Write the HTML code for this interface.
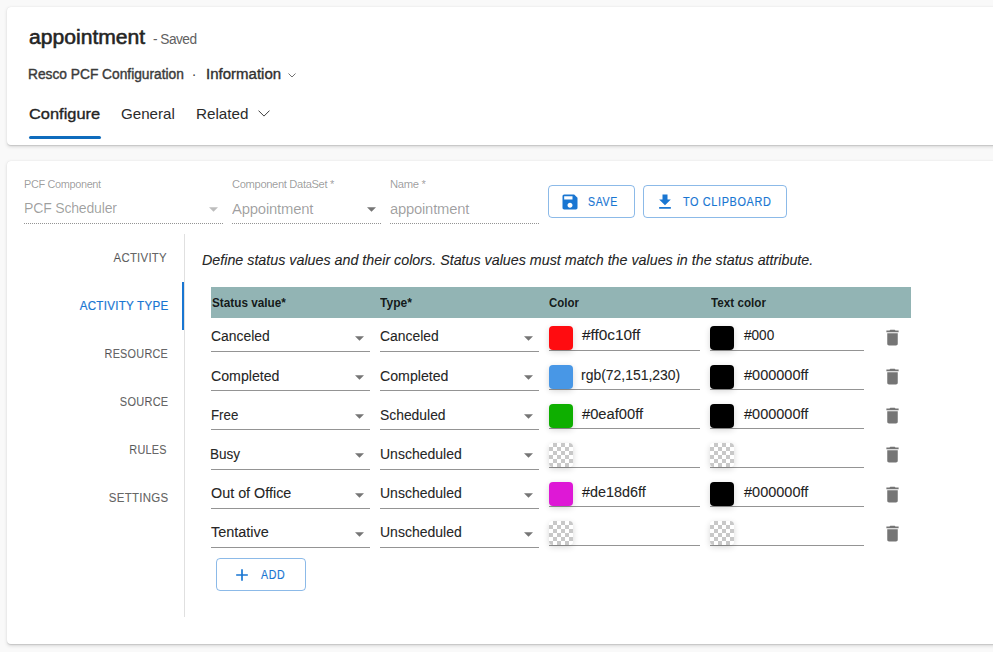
<!DOCTYPE html>
<html><head><meta charset="utf-8">
<style>
*{box-sizing:border-box;margin:0;padding:0}
html,body{width:993px;height:652px;overflow:hidden;background:#f9f9f9;font-family:"Liberation Sans",sans-serif}
body{position:relative}
.abs{position:absolute;white-space:nowrap}
.card{position:absolute;background:#fff;border-radius:4px;box-shadow:0 1.6px 3.6px rgba(0,0,0,.13),0 .3px .9px rgba(0,0,0,.11)}
.t{position:absolute;white-space:nowrap;line-height:1}
.dotl{position:absolute;height:1px;background-image:linear-gradient(to right,rgba(0,0,0,.42) 50%,transparent 50%);background-size:2px 1px;background-repeat:repeat-x}
.btn{position:absolute;border:1px solid rgba(25,118,210,.5);border-radius:4px}
.ul{position:absolute;height:1px;background:rgba(0,0,0,.42)}
.arr{position:absolute;width:9px;height:5px}
.sw{position:absolute;width:24px;height:24px;border-radius:4px;box-shadow:0 2px 6px rgba(0,0,0,.16)}
.chk{background:repeating-conic-gradient(#c8c8c8 0 25%,#fff 0 50%) 0 0/8px 8px}
</style></head>
<body>
<div class="card" style="left:7px;top:7px;width:1000px;height:138px"></div>
<div class="t " style="left:28.70px;top:26.87px;font-size:20px;transform:scaleX(1.0559);transform-origin:0 0;color:#242424;-webkit-text-stroke:0.55px #242424">appointment</div>
<div class="t " style="left:153.00px;top:32.35px;font-size:14px;transform:scaleX(0.9789);transform-origin:0 0;color:#616161;letter-spacing:-0.55px">- Saved</div>
<div class="t " style="left:28.00px;top:67.25px;font-size:14px;transform:scaleX(0.9821);transform-origin:0 0;color:#3b3b3b;-webkit-text-stroke:0.4px #3b3b3b">Resco PCF Configuration</div>
<div class="t " style="left:191.80px;top:67.45px;font-size:14px;color:#424242">·</div>
<div class="t " style="left:205.50px;top:67.15px;font-size:14px;transform:scaleX(1.0725);transform-origin:0 0;color:#303030;-webkit-text-stroke:0.35px #303030">Information</div>
<svg class="abs" style="left:288px;top:72.8px" width="8" height="5" viewBox="0 0 8 5"><path d="M0.5 0.5l3.5 3.5 3.5-3.5" fill="none" stroke="#616161" stroke-width="0.9"/></svg>
<div class="t " style="left:28.50px;top:105.80px;font-size:15px;transform:scaleX(1.0939);transform-origin:0 0;color:#242424;-webkit-text-stroke:0.35px #242424">Configure</div>
<div class="t " style="left:120.50px;top:105.80px;font-size:15px;transform:scaleX(1.0086);transform-origin:0 0;color:#2b2b2b">General</div>
<div class="t " style="left:196.10px;top:105.80px;font-size:15px;transform:scaleX(1.0161);transform-origin:0 0;color:#2b2b2b">Related</div>
<svg class="abs" style="left:257.5px;top:109.5px" width="12" height="7" viewBox="0 0 12 7"><path d="M0.5 0.6l5.5 5.5 5.5-5.5" fill="none" stroke="#333" stroke-width="0.95"/></svg>
<div class="abs" style="left:29px;top:136px;width:72px;height:3px;border-radius:1.5px;background:#0f6cbd"></div>
<div class="card" style="left:7px;top:161px;width:1000px;height:483px"></div>
<div class="t " style="left:23.60px;top:178.89px;font-size:11px;transform:scaleX(0.9922);transform-origin:0 0;color:rgba(0,0,0,.4);letter-spacing:-0.35px">PCF Component</div>
<div class="t " style="left:23.60px;top:200.95px;font-size:14px;transform:scaleX(1.0044);transform-origin:0 0;color:rgba(0,0,0,.38);letter-spacing:-0.2px">PCF Scheduler</div>
<svg class="arr" style="left:209.00px;top:207.40px" viewBox="0 0 9 5"><path d="M0 0.2h9L4.5 4.7z" fill="rgba(0,0,0,.26)"/></svg>
<div class="dotl" style="left:24px;top:223px;width:200px"></div>
<div class="t " style="left:232.40px;top:178.89px;font-size:11px;transform:scaleX(1.0159);transform-origin:0 0;color:rgba(0,0,0,.4);letter-spacing:-0.35px">Component DataSet *</div>
<div class="t " style="left:232.00px;top:201.95px;font-size:14px;transform:scaleX(1.0623);transform-origin:0 0;color:rgba(0,0,0,.38);letter-spacing:-0.2px">Appointment</div>
<svg class="arr" style="left:367.20px;top:207.40px" viewBox="0 0 9 5"><path d="M0 0.2h9L4.5 4.7z" fill="rgba(0,0,0,.54)"/></svg>
<div class="dotl" style="left:232px;top:223px;width:150px"></div>
<div class="t " style="left:389.50px;top:178.89px;font-size:11px;transform:scaleX(1.0238);transform-origin:0 0;color:rgba(0,0,0,.4);letter-spacing:-0.35px">Name *</div>
<div class="t " style="left:390.00px;top:201.95px;font-size:14px;transform:scaleX(1.0562);transform-origin:0 0;color:rgba(0,0,0,.38);letter-spacing:-0.2px">appointment</div>
<div class="dotl" style="left:390px;top:223px;width:150px"></div>
<div class="btn" style="left:548px;top:185px;width:87px;height:33px"></div><svg class="abs" style="left:560px;top:192px" width="20" height="20" viewBox="0 0 24 24"><path fill="#1976d2" d="M17 3H5c-1.11 0-2 .9-2 2v14c0 1.1.89 2 2 2h14c1.1 0 2-.9 2-2V7l-4-4zm-5 16c-1.66 0-3-1.34-3-3s1.34-3 3-3 3 1.34 3 3-1.34 3-3 3zm3-10H5V5h10v4z"/></svg><div class="t " style="left:588.00px;top:196.04px;font-size:12px;transform:scaleX(0.8841);transform-origin:0 0;color:#1976d2;letter-spacing:0.7px;-webkit-text-stroke:0.15px #1976d2">SAVE</div>
<div class="btn" style="left:643px;top:185px;width:144px;height:33px"></div><svg class="abs" style="left:655px;top:192px" width="20" height="20" viewBox="0 0 24 24"><path fill="#1976d2" d="M19 9h-4V3H9v6H5l7 7 7-7zM5 18v2h14v-2H5z"/></svg><div class="t " style="left:683.00px;top:196.04px;font-size:12px;transform:scaleX(0.9074);transform-origin:0 0;color:#1976d2;letter-spacing:0.7px;-webkit-text-stroke:0.15px #1976d2">TO CLIPBOARD</div>
<div class="abs" style="left:184px;top:234px;width:1px;height:383px;background:rgba(0,0,0,.12)"></div>
<div class="abs" style="left:182px;top:282px;width:2px;height:48px;background:#1976d2"></div>
<div class="t " style="right:825.70px;top:251.20px;font-size:13px;transform:scaleX(0.8760);transform-origin:100% 0;color:rgba(0,0,0,.6);letter-spacing:0.3px;-webkit-text-stroke:0.2px rgba(0,0,0,.6)">ACTIVITY</div>
<div class="t " style="right:824.90px;top:299.20px;font-size:13px;transform:scaleX(0.8929);transform-origin:100% 0;color:#1976d2;letter-spacing:0.3px;-webkit-text-stroke:0.2px #1976d2">ACTIVITY TYPE</div>
<div class="t " style="right:824.70px;top:347.20px;font-size:13px;transform:scaleX(0.8352);transform-origin:100% 0;color:rgba(0,0,0,.6);letter-spacing:0.3px;-webkit-text-stroke:0.2px rgba(0,0,0,.6)">RESOURCE</div>
<div class="t " style="right:824.70px;top:395.20px;font-size:13px;transform:scaleX(0.8461);transform-origin:100% 0;color:rgba(0,0,0,.6);letter-spacing:0.3px;-webkit-text-stroke:0.2px rgba(0,0,0,.6)">SOURCE</div>
<div class="t " style="right:825.70px;top:443.20px;font-size:13px;transform:scaleX(0.8362);transform-origin:100% 0;color:rgba(0,0,0,.6);letter-spacing:0.3px;-webkit-text-stroke:0.2px rgba(0,0,0,.6)">RULES</div>
<div class="t " style="right:824.70px;top:491.20px;font-size:13px;transform:scaleX(0.8837);transform-origin:100% 0;color:rgba(0,0,0,.6);letter-spacing:0.3px;-webkit-text-stroke:0.2px rgba(0,0,0,.6)">SETTINGS</div>
<div class="t " style="left:201.50px;top:252.95px;font-size:14px;transform:scaleX(1.0201);transform-origin:0 0;font-style:italic;color:rgba(0,0,0,.87);-webkit-text-stroke:0.2px rgba(0,0,0,.6)">Define status values and their colors. Status values must match the values in the status attribute.</div>
<div class="abs" style="left:211px;top:287px;width:700px;height:31px;background:#92b4b4"></div>
<div class="t " style="left:211.60px;top:296.20px;font-size:13px;transform:scaleX(0.9047);transform-origin:0 0;font-weight:bold;color:rgba(0,0,0,.87)">Status value*</div>
<div class="t " style="left:380.20px;top:296.20px;font-size:13px;transform:scaleX(0.9272);transform-origin:0 0;font-weight:bold;color:rgba(0,0,0,.87)">Type*</div>
<div class="t " style="left:549.00px;top:296.20px;font-size:13px;transform:scaleX(0.8824);transform-origin:0 0;font-weight:bold;color:rgba(0,0,0,.87)">Color</div>
<div class="t " style="left:711.00px;top:296.20px;font-size:13px;transform:scaleX(0.8989);transform-origin:0 0;font-weight:bold;color:rgba(0,0,0,.87)">Text color</div>
<div class="t " style="left:211.40px;top:329.35px;font-size:14px;transform:scaleX(0.9934);transform-origin:0 0;color:rgba(0,0,0,.87);-webkit-text-stroke:0.2px rgba(0,0,0,.6)">Canceled</div>
<svg class="arr" style="left:354.80px;top:335.70px" viewBox="0 0 9 5"><path d="M0 0.2h9L4.5 4.7z" fill="rgba(0,0,0,.54)"/></svg>
<div class="ul" style="left:211px;top:351px;width:159px"></div>
<div class="t " style="left:380.40px;top:329.35px;font-size:14px;transform:scaleX(0.9934);transform-origin:0 0;color:rgba(0,0,0,.87);-webkit-text-stroke:0.2px rgba(0,0,0,.6)">Canceled</div>
<svg class="arr" style="left:523.80px;top:335.70px" viewBox="0 0 9 5"><path d="M0 0.2h9L4.5 4.7z" fill="rgba(0,0,0,.54)"/></svg>
<div class="ul" style="left:380px;top:351px;width:159px"></div>
<div class="ul" style="left:549px;top:350px;width:151px"></div>
<div class="sw" style="left:549px;top:326px;background:#ff0c10"></div>
<div class="t " style="left:582.40px;top:328.35px;font-size:14px;transform:scaleX(1.0969);transform-origin:0 0;color:rgba(0,0,0,.87);-webkit-text-stroke:0.2px rgba(0,0,0,.6)">#ff0c10ff</div>
<div class="ul" style="left:710px;top:350px;width:154px"></div>
<div class="sw" style="left:710px;top:326px;background:#000"></div>
<div class="t " style="left:743.60px;top:328.35px;font-size:14px;transform:scaleX(0.9712);transform-origin:0 0;color:rgba(0,0,0,.87);-webkit-text-stroke:0.2px rgba(0,0,0,.6)">#000</div>
<svg class="abs" style="left:881.5px;top:326.80px" width="21" height="21" viewBox="0 0 24 24"><path fill="rgba(0,0,0,.54)" d="M6 19c0 1.1.9 2 2 2h8c1.1 0 2-.9 2-2V7H6v12zM19 4h-3.5l-1-1h-5l-1 1H5v2h14V4z"/></svg>
<div class="t " style="left:211.40px;top:368.55px;font-size:14px;transform:scaleX(1.0118);transform-origin:0 0;color:rgba(0,0,0,.87);-webkit-text-stroke:0.2px rgba(0,0,0,.6)">Completed</div>
<svg class="arr" style="left:354.80px;top:374.90px" viewBox="0 0 9 5"><path d="M0 0.2h9L4.5 4.7z" fill="rgba(0,0,0,.54)"/></svg>
<div class="ul" style="left:211px;top:390px;width:159px"></div>
<div class="t " style="left:380.40px;top:368.55px;font-size:14px;transform:scaleX(1.0118);transform-origin:0 0;color:rgba(0,0,0,.87);-webkit-text-stroke:0.2px rgba(0,0,0,.6)">Completed</div>
<svg class="arr" style="left:523.80px;top:374.90px" viewBox="0 0 9 5"><path d="M0 0.2h9L4.5 4.7z" fill="rgba(0,0,0,.54)"/></svg>
<div class="ul" style="left:380px;top:390px;width:159px"></div>
<div class="ul" style="left:549px;top:389px;width:151px"></div>
<div class="sw" style="left:549px;top:365px;background:rgb(72,151,230)"></div>
<div class="t " style="left:581.40px;top:367.50px;font-size:14px;transform:scaleX(0.9960);transform-origin:0 0;color:rgba(0,0,0,.87);-webkit-text-stroke:0.2px rgba(0,0,0,.6)">rgb(72,151,230)</div>
<div class="ul" style="left:710px;top:389px;width:154px"></div>
<div class="sw" style="left:710px;top:365px;background:#000"></div>
<div class="t " style="left:743.60px;top:367.50px;font-size:14px;transform:scaleX(1.0356);transform-origin:0 0;color:rgba(0,0,0,.87);-webkit-text-stroke:0.2px rgba(0,0,0,.6)">#000000ff</div>
<svg class="abs" style="left:881.5px;top:366.00px" width="21" height="21" viewBox="0 0 24 24"><path fill="rgba(0,0,0,.54)" d="M6 19c0 1.1.9 2 2 2h8c1.1 0 2-.9 2-2V7H6v12zM19 4h-3.5l-1-1h-5l-1 1H5v2h14V4z"/></svg>
<div class="t " style="left:211.40px;top:407.75px;font-size:14px;transform:scaleX(0.9496);transform-origin:0 0;color:rgba(0,0,0,.87);-webkit-text-stroke:0.2px rgba(0,0,0,.6)">Free</div>
<svg class="arr" style="left:354.80px;top:414.10px" viewBox="0 0 9 5"><path d="M0 0.2h9L4.5 4.7z" fill="rgba(0,0,0,.54)"/></svg>
<div class="ul" style="left:211px;top:429px;width:159px"></div>
<div class="t " style="left:380.40px;top:407.75px;font-size:14px;transform:scaleX(0.9909);transform-origin:0 0;color:rgba(0,0,0,.87);-webkit-text-stroke:0.2px rgba(0,0,0,.6)">Scheduled</div>
<svg class="arr" style="left:523.80px;top:414.10px" viewBox="0 0 9 5"><path d="M0 0.2h9L4.5 4.7z" fill="rgba(0,0,0,.54)"/></svg>
<div class="ul" style="left:380px;top:429px;width:159px"></div>
<div class="ul" style="left:549px;top:428px;width:151px"></div>
<div class="sw" style="left:549px;top:404px;background:#0eaf00"></div>
<div class="t " style="left:582.40px;top:406.65px;font-size:14px;transform:scaleX(1.0513);transform-origin:0 0;color:rgba(0,0,0,.87);-webkit-text-stroke:0.2px rgba(0,0,0,.6)">#0eaf00ff</div>
<div class="ul" style="left:710px;top:428px;width:154px"></div>
<div class="sw" style="left:710px;top:404px;background:#000"></div>
<div class="t " style="left:743.60px;top:406.65px;font-size:14px;transform:scaleX(1.0356);transform-origin:0 0;color:rgba(0,0,0,.87);-webkit-text-stroke:0.2px rgba(0,0,0,.6)">#000000ff</div>
<svg class="abs" style="left:881.5px;top:405.20px" width="21" height="21" viewBox="0 0 24 24"><path fill="rgba(0,0,0,.54)" d="M6 19c0 1.1.9 2 2 2h8c1.1 0 2-.9 2-2V7H6v12zM19 4h-3.5l-1-1h-5l-1 1H5v2h14V4z"/></svg>
<div class="t " style="left:210.40px;top:446.95px;font-size:14px;transform:scaleX(0.9688);transform-origin:0 0;color:rgba(0,0,0,.87);-webkit-text-stroke:0.2px rgba(0,0,0,.6)">Busy</div>
<svg class="arr" style="left:354.80px;top:453.30px" viewBox="0 0 9 5"><path d="M0 0.2h9L4.5 4.7z" fill="rgba(0,0,0,.54)"/></svg>
<div class="ul" style="left:211px;top:469px;width:159px"></div>
<div class="t " style="left:380.40px;top:446.95px;font-size:14px;transform:scaleX(1.0009);transform-origin:0 0;color:rgba(0,0,0,.87);-webkit-text-stroke:0.2px rgba(0,0,0,.6)">Unscheduled</div>
<svg class="arr" style="left:523.80px;top:453.30px" viewBox="0 0 9 5"><path d="M0 0.2h9L4.5 4.7z" fill="rgba(0,0,0,.54)"/></svg>
<div class="ul" style="left:380px;top:469px;width:159px"></div>
<div class="ul" style="left:549px;top:467px;width:151px"></div>
<div class="sw chk" style="left:549px;top:443px"></div>
<div class="ul" style="left:710px;top:467px;width:154px"></div>
<div class="sw chk" style="left:710px;top:443px"></div>
<svg class="abs" style="left:881.5px;top:444.40px" width="21" height="21" viewBox="0 0 24 24"><path fill="rgba(0,0,0,.54)" d="M6 19c0 1.1.9 2 2 2h8c1.1 0 2-.9 2-2V7H6v12zM19 4h-3.5l-1-1h-5l-1 1H5v2h14V4z"/></svg>
<div class="t " style="left:211.40px;top:486.15px;font-size:14px;transform:scaleX(1.0256);transform-origin:0 0;color:rgba(0,0,0,.87);-webkit-text-stroke:0.2px rgba(0,0,0,.6)">Out of Office</div>
<svg class="arr" style="left:354.80px;top:492.50px" viewBox="0 0 9 5"><path d="M0 0.2h9L4.5 4.7z" fill="rgba(0,0,0,.54)"/></svg>
<div class="ul" style="left:211px;top:508px;width:159px"></div>
<div class="t " style="left:380.40px;top:486.15px;font-size:14px;transform:scaleX(1.0009);transform-origin:0 0;color:rgba(0,0,0,.87);-webkit-text-stroke:0.2px rgba(0,0,0,.6)">Unscheduled</div>
<svg class="arr" style="left:523.80px;top:492.50px" viewBox="0 0 9 5"><path d="M0 0.2h9L4.5 4.7z" fill="rgba(0,0,0,.54)"/></svg>
<div class="ul" style="left:380px;top:508px;width:159px"></div>
<div class="ul" style="left:549px;top:506px;width:151px"></div>
<div class="sw" style="left:549px;top:482px;background:#de18d6"></div>
<div class="t " style="left:582.40px;top:484.95px;font-size:14px;transform:scaleX(1.0259);transform-origin:0 0;color:rgba(0,0,0,.87);-webkit-text-stroke:0.2px rgba(0,0,0,.6)">#de18d6ff</div>
<div class="ul" style="left:710px;top:506px;width:154px"></div>
<div class="sw" style="left:710px;top:482px;background:#000"></div>
<div class="t " style="left:743.60px;top:484.95px;font-size:14px;transform:scaleX(1.0356);transform-origin:0 0;color:rgba(0,0,0,.87);-webkit-text-stroke:0.2px rgba(0,0,0,.6)">#000000ff</div>
<svg class="abs" style="left:881.5px;top:483.60px" width="21" height="21" viewBox="0 0 24 24"><path fill="rgba(0,0,0,.54)" d="M6 19c0 1.1.9 2 2 2h8c1.1 0 2-.9 2-2V7H6v12zM19 4h-3.5l-1-1h-5l-1 1H5v2h14V4z"/></svg>
<div class="t " style="left:211.40px;top:525.35px;font-size:14px;transform:scaleX(1.0321);transform-origin:0 0;color:rgba(0,0,0,.87);-webkit-text-stroke:0.2px rgba(0,0,0,.6)">Tentative</div>
<svg class="arr" style="left:354.80px;top:531.70px" viewBox="0 0 9 5"><path d="M0 0.2h9L4.5 4.7z" fill="rgba(0,0,0,.54)"/></svg>
<div class="ul" style="left:211px;top:547px;width:159px"></div>
<div class="t " style="left:380.40px;top:525.35px;font-size:14px;transform:scaleX(1.0009);transform-origin:0 0;color:rgba(0,0,0,.87);-webkit-text-stroke:0.2px rgba(0,0,0,.6)">Unscheduled</div>
<svg class="arr" style="left:523.80px;top:531.70px" viewBox="0 0 9 5"><path d="M0 0.2h9L4.5 4.7z" fill="rgba(0,0,0,.54)"/></svg>
<div class="ul" style="left:380px;top:547px;width:159px"></div>
<div class="ul" style="left:549px;top:545px;width:151px"></div>
<div class="sw chk" style="left:549px;top:521px"></div>
<div class="ul" style="left:710px;top:545px;width:154px"></div>
<div class="sw chk" style="left:710px;top:521px"></div>
<svg class="abs" style="left:881.5px;top:522.80px" width="21" height="21" viewBox="0 0 24 24"><path fill="rgba(0,0,0,.54)" d="M6 19c0 1.1.9 2 2 2h8c1.1 0 2-.9 2-2V7H6v12zM19 4h-3.5l-1-1h-5l-1 1H5v2h14V4z"/></svg>
<div class="btn" style="left:216px;top:558px;width:90px;height:33px"></div>
<svg class="abs" style="left:232px;top:565px" width="20" height="20" viewBox="0 0 24 24"><path fill="#1976d2" d="M19 13h-6v6h-2v-6H5v-2h6V5h2v6h6v2z"/></svg>
<div class="t " style="left:261.40px;top:568.84px;font-size:12px;transform:scaleX(0.8837);transform-origin:0 0;color:#1976d2;letter-spacing:0.7px;-webkit-text-stroke:0.15px #1976d2">ADD</div>
</body></html>
